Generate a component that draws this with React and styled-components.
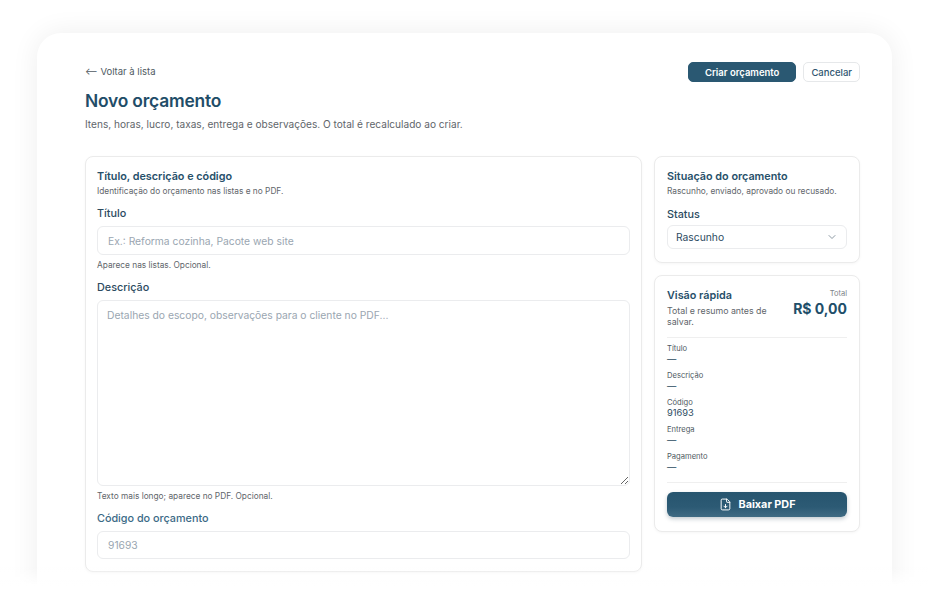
import React from 'react'
import styled, { createGlobalStyle } from 'styled-components'
import { ChevronDown, FileDown } from 'lucide-react'

const GlobalStyle = createGlobalStyle`
  html, body {
    margin: 0;
    padding: 0;
    background: #ffffff;
    overflow: hidden;
  }
  body {
    font-family: Inter, 'Noto Sans', 'Liberation Sans', sans-serif;
    color: #2b4a5e;
    -webkit-font-smoothing: antialiased;
  }
  * { box-sizing: border-box; }
`

const summary = [
  { label: 'Título', value: '—' },
  { label: 'Descrição', value: '—' },
  { label: 'Código', value: '91693' },
  { label: 'Entrega', value: '—' },
  { label: 'Pagamento', value: '—' },
]

const App = () => {
  return (
    <>
      <GlobalStyle />
      <Page>
        <Frame>
          <Header>
            <div>
              <BackLink href='#'>⟵ Voltar à lista</BackLink>
              <Title>Novo orçamento</Title>
              <Subtitle>
                Itens, horas, lucro, taxas, entrega e observações. O total é recalculado ao criar.
              </Subtitle>
            </div>
            <Actions>
              <Button $primary>Criar orçamento</Button>
              <Button>Cancelar</Button>
            </Actions>
          </Header>

          <Columns>
            <Card>
              <CardTitle>Título, descrição e código</CardTitle>
              <CardSub>Identificação do orçamento nas listas e no PDF.</CardSub>

              <Label>Título</Label>
              <Input placeholder='Ex.: Reforma cozinha, Pacote web site' />
              <Hint>Aparece nas listas. Opcional.</Hint>

              <Label>Descrição</Label>
              <TextArea placeholder='Detalhes do escopo, observações para o cliente no PDF...' />
              <Hint>Texto mais longo; aparece no PDF. Opcional.</Hint>

              <Label $soft>Código do orçamento</Label>
              <Input $short placeholder='91693' />
            </Card>

            <Side>
              <Card $pad='13px 12px 13px'>
                <CardTitle>Situação do orçamento</CardTitle>
                <CardSub>Rascunho, enviado, aprovado ou recusado.</CardSub>
                <Label $tight>Status</Label>
                <Select>
                  <span>Rascunho</span>
                  <ChevronDown size={12} strokeWidth={1.6} color='#6f7f8c' />
                </Select>
              </Card>

              <Card $pad='13px 12px 14px'>
                <QuickHead>
                  <div>
                    <CardTitle>Visão rápida</CardTitle>
                    <QuickSub>Total e resumo antes de salvar.</QuickSub>
                  </div>
                  <TotalBox>
                    <TotalLabel>Total</TotalLabel>
                    <TotalValue>R$ 0,00</TotalValue>
                  </TotalBox>
                </QuickHead>
                <Divider />
                <SummaryList>
                  {summary.map((item) => (
                    <SummaryItem key={item.label}>
                      <SummaryLabel>{item.label}</SummaryLabel>
                      <SummaryValue>{item.value}</SummaryValue>
                    </SummaryItem>
                  ))}
                </SummaryList>
                <Divider $bottom />
                <PdfButton>
                  <FileDown size={13} strokeWidth={1.8} />
                  Baixar PDF
                </PdfButton>
              </Card>
            </Side>
          </Columns>
        </Frame>
      </Page>
      <Fade />
    </>
  )
}

const Page = styled.div`
  padding: 33px 36px 0 37px;
`

const Frame = styled.div`
  width: 855px;
  min-height: 600px;
  background: #ffffff;
  border-radius: 24px;
  box-shadow: 0 0 28px rgba(0, 0, 0, 0.07);
  padding: 29px 32px 0 48px;
`

const Header = styled.div`
  display: flex;
  justify-content: space-between;
  align-items: flex-start;
`

const BackLink = styled.a`
  display: block;
  font-size: 9.5px;
  line-height: 20px;
  color: #4f5a62;
  text-decoration: none;
`

const Title = styled.h1`
  margin: 7px 0 0;
  font-size: 17.4px;
  line-height: 24px;
  font-weight: 600;
  color: #1f4d68;
  letter-spacing: -0.2px;
`

const Subtitle = styled.p`
  margin: 3px 0 0;
  font-size: 10.1px;
  line-height: 16px;
  color: #5f666b;
`

const Actions = styled.div`
  display: flex;
  gap: 7px;
`

const Button = styled.button`
  height: 20px;
  padding: 0 ${(p) => (p.$primary ? '16px' : '7px')};
  border-radius: 5px;
  font-family: inherit;
  font-size: 9.5px;
  font-weight: ${(p) => (p.$primary ? 600 : 500)};
  border: 1px solid ${(p) => (p.$primary ? '#2a5872' : '#e6e8ea')};
  background: ${(p) => (p.$primary ? '#2a5872' : '#ffffff')};
  color: ${(p) => (p.$primary ? '#ffffff' : '#2f5670')};
  cursor: pointer;
`

const Columns = styled.div`
  display: grid;
  grid-template-columns: 557px 206px;
  gap: 12px;
  margin-top: 24px;
  align-items: start;
`

const Side = styled.div`
  display: flex;
  flex-direction: column;
  gap: 12px;
`

const Card = styled.section`
  display: flex;
  flex-direction: column;
  background: #ffffff;
  border: 1px solid #ebebeb;
  border-radius: 8px;
  box-shadow: 0 1px 3px rgba(0, 0, 0, 0.04);
  padding: ${(p) => p.$pad || '13px 11px 12px'};
`

const CardTitle = styled.h2`
  margin: 0;
  font-size: 10.8px;
  line-height: 14px;
  font-weight: 600;
  color: #27506a;
`

const CardSub = styled.p`
  margin: 1px 0 0;
  font-size: 8.3px;
  line-height: 12px;
  color: #5f666b;
`

const Label = styled.label`
  display: block;
  margin-top: ${(p) => (p.$tight ? '11px' : '10px')};
  font-size: 10.8px;
  line-height: 14px;
  font-weight: 500;
  color: ${(p) => (p.$soft ? '#3b6a86' : '#2c4b5f')};
  & + input, & + textarea {
    margin-top: 5px;
  }
`

const fieldBase = `
  width: 100%;
  border: 1px solid #ebecee;
  border-radius: 6px;
  background: #ffffff;
  font-family: inherit;
  font-size: 10.3px;
  color: #2c4b5f;
  padding: 0 10px;
  outline: none;
  &::placeholder {
    color: #9aa6b1;
  }
`

const Input = styled.input`
  ${fieldBase}
  height: ${(p) => (p.$short ? '28px' : '29px')};
`

const TextArea = styled.textarea`
  ${fieldBase}
  height: 186px;
  padding: 8px 9px;
  resize: vertical;
`

const Hint = styled.p`
  margin: 4px 0 0;
  font-size: 8.3px;
  line-height: 12px;
  color: #5f666b;
`

const Select = styled.div`
  display: flex;
  align-items: center;
  justify-content: space-between;
  margin-top: 3px;
  height: 24px;
  padding: 0 8px;
  border: 1px solid #ebecee;
  border-radius: 6px;
  font-size: 10.3px;
  color: #2c4b5f;
`

const QuickHead = styled.div`
  display: flex;
  justify-content: space-between;
  align-items: flex-start;
`

const QuickSub = styled.p`
  margin: 2px 0 0;
  width: 108px;
  font-size: 8.8px;
  line-height: 11px;
  color: #5f666b;
`

const TotalBox = styled.div`
  text-align: right;
`

const TotalLabel = styled.div`
  font-size: 7.5px;
  line-height: 10px;
  color: #7c8389;
`

const TotalValue = styled.div`
  margin-top: 2px;
  font-size: 14px;
  line-height: 16px;
  font-weight: 700;
  color: #214e69;
`

const Divider = styled.hr`
  width: 100%;
  margin: ${(p) => (p.$bottom ? '3px 0 9px' : '10px 0 6px')};
  border: 0;
  border-top: 1px solid #efefef;
`

const SummaryList = styled.div`
  display: flex;
  flex-direction: column;
`

const SummaryItem = styled.div`
  height: 27px;
`

const SummaryLabel = styled.div`
  font-size: 7.6px;
  line-height: 9px;
  color: #4f5a62;
`

const SummaryValue = styled.div`
  font-size: 9.3px;
  line-height: 11px;
  color: #2c4b5f;
`

const PdfButton = styled.button`
  display: flex;
  align-items: center;
  justify-content: center;
  gap: 7px;
  height: 25px;
  border: 0;
  border-radius: 6px;
  background: linear-gradient(180deg, #27556f 0%, #2c5a74 60%, #3f6b83 100%);
  box-shadow: 0 2px 4px rgba(20, 50, 70, 0.25);
  color: #ffffff;
  font-family: inherit;
  font-size: 10.8px;
  font-weight: 700;
  cursor: pointer;
`

const Fade = styled.div`
  position: fixed;
  left: 0;
  right: 0;
  bottom: 0;
  height: 26px;
  background: linear-gradient(180deg, rgba(255, 255, 255, 0) 0%, #ffffff 75%);
  pointer-events: none;
`

export default App
